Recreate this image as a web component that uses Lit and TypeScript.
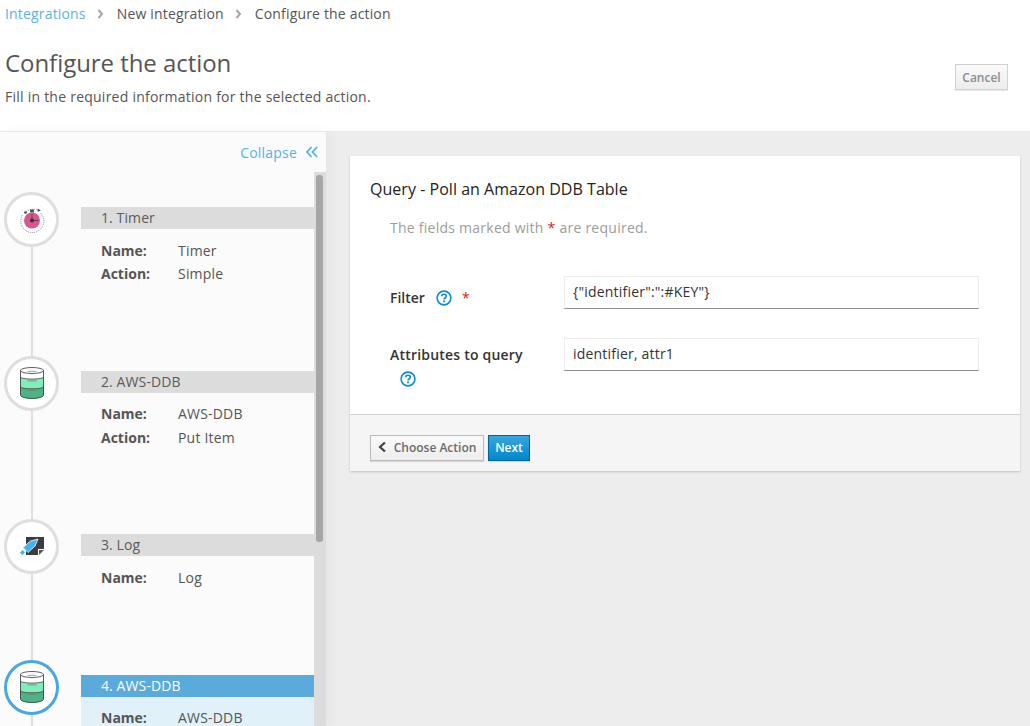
import { LitElement, html, css, svg } from "lit";
import { customElement } from "lit/decorators.js";

const timerIcon = svg`<svg class="icon" viewBox="0 0 30 30" width="30" height="30">
  <path d="M5.500 10A11.500 11.500 0 1 0 23.500 8" fill="none" stroke="#555" stroke-width=".6" stroke-dasharray="1.200 .8"/>
  <path d="M8 8A11 11 0 0 1 20.500 5" fill="none" stroke="#555" stroke-width=".6" stroke-dasharray="1.200 .8"/>
  <path d="M20.500 3.500l3.300 2-3 1.300z" fill="#444"/>
  <rect x="13" y="4.500" width="4" height="3" fill="#555"/>
  <circle cx="8.500" cy="7.500" r="1.300" fill="#444"/>
  <circle cx="15" cy="15.500" r="8" fill="#d9568f"/>
  <circle cx="15" cy="15.500" r="2" fill="#333"/>
  <path d="M15 9v6.500h6.500" fill="none" stroke="#333" stroke-width=".7"/>
</svg>`;

const dbIcon = svg`<svg class="icon" viewBox="0 0 24 32" width="24" height="32">
  <path d="M.5 3.500h23V28c0 2-5 3.500-11.500 3.500S.5 30 .5 28z" fill="#fff"/>
  <path d="M.5 10c0 1.200 5 2 11.500 2s11.500-.8 11.500-2v18c0 2-5 3.500-11.500 3.500S.5 30 .5 28z" fill="#80ecb8"/>
  <path d="M.5 19.500c0 1.500 5 2.300 11.500 2.300s11.500-.8 11.500-2.300V28c0 2-5 3.500-11.500 3.500S.5 30 .5 28z" fill="#4cb385"/>
  <ellipse cx="12" cy="3.500" rx="11.500" ry="3" fill="#fff" stroke="#333" stroke-width=".8"/>
  <path d="M.5 3.500V28c0 2 5 3.500 11.500 3.500s11.500-1.500 11.500-3.500V3.500" fill="none" stroke="#333" stroke-width=".8"/>
  <path d="M.5 10c0 1.200 5 2 11.500 2s11.500-.8 11.500-2M.5 19.500c0 1.500 5 2.300 11.500 2.300s11.500-.8 11.500-2.300" fill="none" stroke="#333" stroke-width=".7"/>
  <path d="M7.500 4.300h9M7.500 13.800h9M7.500 23.500h9" stroke="#777" stroke-width=".7"/>
</svg>`;

const logIcon = svg`<svg class="icon" viewBox="0 0 24 19" width="24" height="19">
  <rect x="6" y="0" width="18" height="18" fill="#3d3d3d"/>
  <rect x="18" y="12" width="6" height="6" fill="#fff"/>
  <path d="M19 13h5l-5 5z" fill="#555"/>
  <path d="M3 10.500L10.500 4 18 2 15 9 8 15.500z" fill="#3fb4f0" stroke="#fff" stroke-width=".8"/>
  <path d="M0 15.500L2.500 13 5 15.500 2.500 18z" fill="#3fb4f0"/>
</svg>`;

const helpIcon = html`<svg class="help" viewBox="0 0 16 16" width="16" height="16">
  <circle cx="8" cy="8" r="6.900" fill="none" stroke="#0d8bd3" stroke-width="1.600"/>
  <path d="M5.700 6.300c0-1.400 1-2.100 2.300-2.100s2.300.8 2.300 2c0 1.800-2.300 1.800-2.300 3.400" fill="none" stroke="#0d8bd3" stroke-width="1.600"/>
  <rect x="7.100" y="10.500" width="1.800" height="1.800" fill="#0d8bd3"/>
</svg>`;

interface Step {
  title: string;
  icon: unknown;
  rows: [string, string][];
  short?: boolean;
  active?: boolean;
}

const steps: Step[] = [
  { title: "1. Timer", icon: timerIcon, rows: [["Name:", "Timer"], ["Action:", "Simple"]] },
  { title: "2. AWS-DDB", icon: dbIcon, rows: [["Name:", "AWS-DDB"], ["Action:", "Put Item"]] },
  { title: "3. Log", icon: logIcon, rows: [["Name:", "Log"]], short: true },
  { title: "4. AWS-DDB", icon: dbIcon, rows: [["Name:", "AWS-DDB"]], active: true },
];

@customElement("app-root")
export class AppRoot extends LitElement {
  static styles = css`
    :host {
      display: flex;
      flex-direction: column;
      height: 100vh;
      overflow: hidden;
      background: #ededed;
      font-family: "Open Sans", "Noto Sans", sans-serif;
      font-size: 14px;
      letter-spacing: .2px;
      color: #555;
    }
    .head {
      flex: none;
      box-sizing: border-box;
      height: 132px;
      background: #fff;
      border-bottom: 1px solid #ececec;
      display: flex;
      justify-content: space-between;
      padding: 4px 22px 0 5px;
    }
    .crumbs {
      display: flex;
      align-items: center;
      height: 20px;
      line-height: 20px;
      letter-spacing: .17px;
    }
    .crumbs a { color: #5cb3e3; }
    .chev {
      width: 31px;
      display: flex;
      justify-content: center;
    }
    h1 {
      margin: 20px 0 0;
      font-size: 24px;
      font-weight: 400;
      letter-spacing: -.05px;
      line-height: 38px;
      color: #555;
    }
    .sub { margin: 5px 0 0; line-height: 20px; letter-spacing: .24px; }
    .cancel {
      margin-top: 60px;
      box-sizing: border-box;
      width: 53px;
      height: 26px;
      border: 1px solid #d1d1d1;
      background: linear-gradient(#fafafa, #ededed);
      box-shadow: 0 1px 1px rgba(0, 0, 0, .08);
      font: 600 12px "Open Sans", sans-serif;
      color: #8b8d8f;
      padding: 0;
    }
    .body { flex: 1; display: flex; min-height: 0; }
    .side {
      flex: none;
      width: 326px;
      background: #fbfbfb;
      display: flex;
      flex-direction: column;
      box-shadow: 4px 0 12px rgba(0, 0, 0, .035);
    }
    .collapse {
      flex: none;
      height: 40px;
      display: flex;
      justify-content: flex-end;
      align-items: center;
      padding-right: 8px;
      color: #55b2e4;
      box-sizing: border-box;
    }
    .collapse-inner { display: flex; align-items: center; gap: 9px; }
    .scrollwrap { flex: 1; min-height: 0; display: flex; }
    .steps { flex: 1; min-width: 0; padding-top: 20px; overflow: hidden; }
    .track {
      flex: none;
      width: 12px;
      background: #dcdcdc;
      box-sizing: border-box;
      padding: 3px 3px 0 2px;
    }
    .thumb { height: 367px; background: #a5a6a7; border-radius: 3px; }
    .step { display: flex; height: 163.600px; }
    .step.short { height: 140.600px; }
    .rail {
      flex: none;
      width: 81px;
      box-sizing: border-box;
      padding-left: 4px;
      display: flex;
      flex-direction: column;
    }
    .node {
      flex: none;
      box-sizing: border-box;
      width: 55px;
      height: 55px;
      border: 3px solid #dedede;
      border-radius: 50%;
      background: #fff;
      display: flex;
      align-items: center;
      justify-content: center;
    }
    .active .node { border-color: #46a9e2; }
    .line { flex: 1; width: 2px; margin-left: 27px; background: #dedede; }
    .content { flex: 1; min-width: 0; padding-top: 15px; }
    .bar {
      height: 22px;
      line-height: 22px;
      background: #dcdcdc;
      padding-left: 20px;
      letter-spacing: .1px;
      color: #5b5b5b;
    }
    .active .bar { background: #5aaadb; color: #fff; }
    .meta { padding: 9.600px 0 0 20px; line-height: 23.500px; }
    .active .meta {
      background: #e0f1fa;
      height: 140px;
      box-sizing: border-box;
    }
    .row { display: flex; }
    .row b { width: 77px; font-weight: 700; letter-spacing: 0; color: #555; }
    .main { flex: 1; min-width: 0; padding: 24px 10px 0 24px; }
    .card {
      background: #fff;
      box-shadow: 0 1px 2px rgba(0, 0, 0, .2);
    }
    .card-body { padding: 23px 41px 0 20px; height: 258px; box-sizing: border-box; }
    h2 {
      margin: 0;
      font-size: 16px;
      font-weight: 400;
      letter-spacing: .03px;
      line-height: 20px;
      color: #222;
    }
    .note {
      margin: 19px 0 0 20px;
      line-height: 20px;
      letter-spacing: .25px;
      color: #9c9c9c;
    }
    .req { color: #d9161c; }
    .field { display: flex; margin: 0 0 30px 20px; }
    .field + .field { margin-top: -1px; }
    .note + .field { margin-top: 38px; }
    .label {
      width: 174px;
      flex: none;
      font-weight: 600;
      color: #333;
      line-height: 20px;
      padding-top: 12px;
      box-sizing: border-box;
    }
    .label.tall { padding-top: 7px; }
    .label .inline { display: flex; align-items: center; letter-spacing: 0; }
    .label .help { margin-left: 11px; }
    .label .star { margin-left: 10px; font-weight: 400; }
    .label .under { display: flex; padding: 0 0 0 10px; margin-top: 6px; }
    .label .under .help { margin: 0; }
    .input {
      flex: 1;
      box-sizing: border-box;
      height: 33px;
      border: 1px solid #ededed;
      border-bottom: 1px solid #8b8d8f;
      padding: 0 8px;
      line-height: 29px;
      color: #333;
    }
    .foot {
      height: 57px;
      box-sizing: border-box;
      background: #f5f5f5;
      border-top: 1px solid #d1d1d1;
      padding: 20px;
      display: flex;
      gap: 4px;
    }
    .btn {
      box-sizing: border-box;
      height: 26px;
      padding: 0 0 2px;
      font: 600 12px "Open Sans", sans-serif;
      display: flex;
      align-items: center;
      justify-content: center;
      box-shadow: 0 1px 1px rgba(0, 0, 0, .12);
    }
    .back {
      width: 114px;
      gap: 8px;
      border: 1px solid #bbb;
      background: linear-gradient(#fafafa, #ededed);
      color: #6b6b6b;
    }
    .next {
      width: 42px;
      border: 1px solid #00659c;
      background: linear-gradient(#39a5dc, #0088ce);
      color: #fff;
    }
  `;

  render() {
    const chevron = html`<svg viewBox="0 0 8 10" width="8" height="10"><path d="M1.500 1l3.500 4-3.500 4" fill="none" stroke="#a8a8a8" stroke-width="2"/></svg>`;
    return html`
      <header class="head">
        <div>
          <nav class="crumbs">
            <a>Integrations</a><span class="chev">${chevron}</span>
            <span>New integration</span><span class="chev">${chevron}</span>
            <span>Configure the action</span>
          </nav>
          <h1>Configure the action</h1>
          <p class="sub">Fill in the required information for the selected action.</p>
        </div>
        <button class="cancel">Cancel</button>
      </header>
      <div class="body">
        <aside class="side">
          <div class="collapse">
            <div class="collapse-inner">
              <span>Collapse</span>
              <svg viewBox="0 0 12 12" width="12" height="12">
                <path d="M5.500 1L1 6l4.500 5M11 1L6.500 6l4.500 5" fill="none" stroke="#55b2e4" stroke-width="1.800"/>
              </svg>
            </div>
          </div>
          <div class="scrollwrap">
            <div class="steps">
              ${steps.map(
                (s) => html`
                  <div class="step ${s.short ? "short" : ""} ${s.active ? "active" : ""}">
                    <div class="rail">
                      <div class="node">${s.icon}</div>
                      <div class="line"></div>
                    </div>
                    <div class="content">
                      <div class="bar">${s.title}</div>
                      <div class="meta">
                        ${s.rows.map(
                          ([k, v]) => html`<div class="row"><b>${k}</b><span>${v}</span></div>`
                        )}
                      </div>
                    </div>
                  </div>
                `
              )}
            </div>
            <div class="track"><div class="thumb"></div></div>
          </div>
        </aside>
        <main class="main">
          <section class="card">
            <div class="card-body">
              <h2>Query - Poll an Amazon DDB Table</h2>
              <p class="note">The fields marked with <span class="req">*</span> are required.</p>
              <div class="field">
                <div class="label">
                  <div class="inline">Filter ${helpIcon}<span class="star req">*</span></div>
                </div>
                <div class="input">{"identifier":":#KEY"}</div>
              </div>
              <div class="field">
                <div class="label tall">
                  <div>Attributes to query</div>
                  <div class="under">${helpIcon}</div>
                </div>
                <div class="input">identifier, attr1</div>
              </div>
            </div>
            <div class="foot">
              <button class="btn back">
                <svg viewBox="0 0 8 10" width="8" height="10"><path d="M7 .5L2 5l5 4.500" fill="none" stroke="#444" stroke-width="2.200"/></svg>
                Choose Action
              </button>
              <button class="btn next">Next</button>
            </div>
          </section>
        </main>
      </div>
    `;
  }
}
